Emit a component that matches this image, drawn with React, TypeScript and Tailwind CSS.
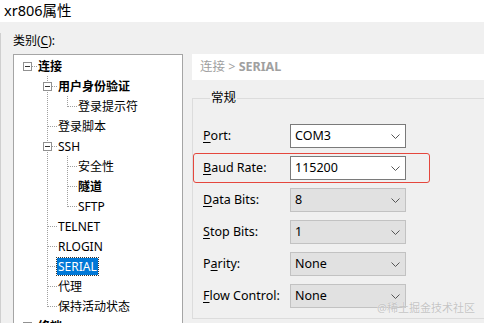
import React from "react";

type Conn = "root" | "mid" | "last";
type Node = {
  label: string;
  anc: boolean[];
  conn: Conn;
  box?: boolean;
  bold?: boolean;
  selected?: boolean;
};

const tree: Node[] = [
  { label: "连接", anc: [], conn: "root", box: true, bold: true },
  { label: "用户身份验证", anc: [false], conn: "mid", box: true, bold: true },
  { label: "登录提示符", anc: [false, true], conn: "last" },
  { label: "登录脚本", anc: [false], conn: "mid" },
  { label: "SSH", anc: [false], conn: "mid", box: true },
  { label: "安全性", anc: [false, true], conn: "mid" },
  { label: "隧道", anc: [false, true], conn: "mid", bold: true },
  { label: "SFTP", anc: [false, true], conn: "last" },
  { label: "TELNET", anc: [false], conn: "mid" },
  { label: "RLOGIN", anc: [false], conn: "mid" },
  { label: "SERIAL", anc: [false], conn: "mid", selected: true },
  { label: "代理", anc: [false], conn: "mid" },
  { label: "保持活动状态", anc: [false], conn: "last" },
  { label: "终端", anc: [], conn: "root", box: true, bold: true },
];

const dot = { stroke: "#a0a0a0", strokeDasharray: "1 1", shapeRendering: "crispEdges" as const };

function Cell({ line, conn, box }: { line?: boolean; conn?: Conn; box?: boolean }) {
  return (
    <svg width="20" height="20" className="shrink-0">
      {line && <line x1="10.5" y1="0" x2="10.5" y2="20" {...dot} />}
      {conn === "mid" && <line x1="10.5" y1="0" x2="10.5" y2="20" {...dot} />}
      {conn === "last" && <line x1="10.5" y1="0" x2="10.5" y2="11" {...dot} />}
      {conn && <line x1="11" y1="10.5" x2="20" y2="10.5" {...dot} />}
      {box && (
        <>
          <rect x="6.5" y="6.5" width="8" height="8" fill="#fff" stroke="#919191" shapeRendering="crispEdges" />
          <line x1="8" y1="10.5" x2="13" y2="10.5" stroke="#333" shapeRendering="crispEdges" />
        </>
      )}
    </svg>
  );
}

function TreeRow({ n }: { n: Node }) {
  return (
    <div className="flex h-5 items-center">
      {n.anc.map((l, i) => (
        <Cell key={i} line={l} />
      ))}
      <Cell conn={n.conn} box={n.box} />
      <span
        className={`h-[17px] px-px leading-[17px] whitespace-nowrap ${n.bold ? "font-bold" : ""} ${
          n.selected ? "bg-[#0078d7] text-white outline outline-1 outline-dotted outline-[#333]" : "text-black"
        }`}
      >
        {n.label}
      </span>
    </div>
  );
}

function Chevron() {
  return (
    <svg width="9" height="5" className="shrink-0">
      <polyline points="0.5,0.5 4.5,4.5 8.5,0.5" fill="none" stroke="#555" />
    </svg>
  );
}

type Field = { pre: string; key: string; post: string; value: string; enabled?: boolean; mark?: boolean };

const fields: Field[] = [
  { pre: "", key: "P", post: "ort:", value: "COM3", enabled: true },
  { pre: "", key: "B", post: "aud Rate:", value: "115200", enabled: true, mark: true },
  { pre: "", key: "D", post: "ata Bits:", value: "8" },
  { pre: "", key: "S", post: "top Bits:", value: "1" },
  { pre: "P", key: "a", post: "rity:", value: "None" },
  { pre: "", key: "F", post: "low Control:", value: "None" },
];

function FieldRow({ f }: { f: Field }) {
  return (
    <div className="relative flex h-6 items-center">
      {f.mark && (
        <div className="pointer-events-none absolute -left-[10px] -top-[3px] h-[30px] w-[237px] rounded-[3px] border border-[#e5473d]" />
      )}
      <label className="w-[87px] text-black">
        {f.pre}
        <span className="underline underline-offset-2">{f.key}</span>
        {f.post}
      </label>
      <div
        className={`flex h-6 w-[116px] items-center justify-between border pl-1 pr-[5px] ${
          f.enabled ? "border-[#7a7a7a] bg-white" : "border-[#c2c2c2] bg-[#e1e1e1]"
        }`}
      >
        <span className="text-black">{f.value}</span>
        <Chevron />
      </div>
    </div>
  );
}

export default function App() {
  return (
    <div className="relative h-[323px] w-[484px] overflow-hidden bg-[#f0f0f0] font-['Noto_Sans','Noto_Sans_CJK_SC',sans-serif] text-[12px]">
      <div className="h-[22px] bg-white pl-1 text-[14.5px] leading-[20px] text-black">xr806属性</div>
      <div className="h-[301px] border-l border-[#cfcfcf] pl-3">
        <div className="mt-[11px] h-4 leading-4 text-black">
          类别(<span className="underline underline-offset-2">C</span>):
        </div>
        <div className="mt-[5px] flex">
          <div className="h-[300px] w-[170px] shrink-0 border border-[#a5a5a5] bg-white pl-[3px] pt-px">
            {tree.map((n) => (
              <TreeRow key={n.label} n={n} />
            ))}
          </div>
          <div className="ml-[9px] w-[310px] shrink-0 text-[12.5px]">
            <div className="h-[26px] bg-white pl-2 leading-[26px] text-[#a0a0a0]">
              连接 &gt; <span className="font-bold">SERIAL</span>
            </div>
            <fieldset className="mt-[10px] h-[229px] border border-[#dcdcdc] px-[10px] pt-[18px]">
              <legend className="ml-[7px] px-px leading-4 text-black">常规</legend>
              <div className="flex flex-col gap-2">
                {fields.map((f) => (
                  <FieldRow key={f.key + f.post} f={f} />
                ))}
              </div>
            </fieldset>
          </div>
        </div>
      </div>
      <div className="absolute bottom-[8px] right-[9px] text-[11px] leading-[14px] text-[#c4c4c4] [text-shadow:0_0_1px_#fff]">
        @稀土掘金技术社区
      </div>
    </div>
  );
}
